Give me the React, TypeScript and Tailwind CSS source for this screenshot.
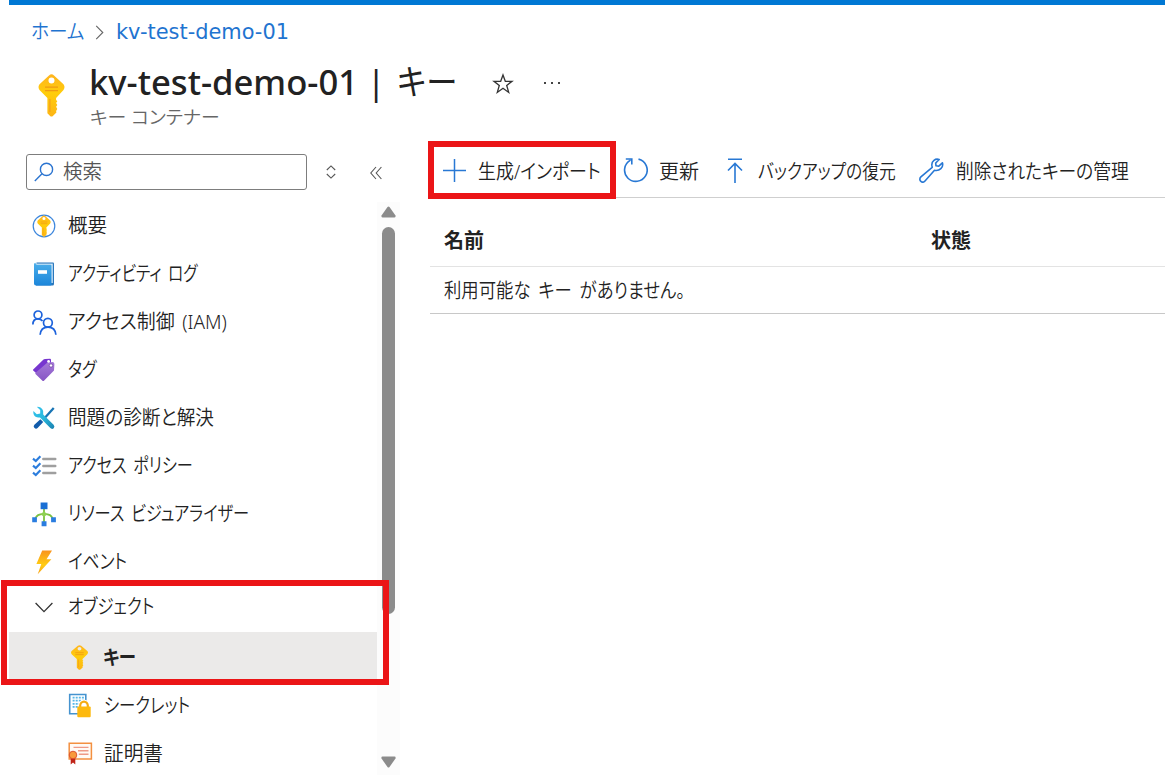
import React, { useLayoutEffect, useRef, useState } from 'react';

interface FitProps {
  width: number;
  className?: string;
  children: string;
}

// Condenses a label horizontally so that it takes exactly `width` pixels
const Fit: React.FC<FitProps> = ({ width, className = '', children }) => {
  const ref = useRef<HTMLSpanElement>(null);
  const [scale, setScale] = useState(1);

  useLayoutEffect(() => {
    if (ref.current) {
      setScale(width / ref.current.offsetWidth);
    }
  }, [width, children]);

  return (
    <span className={`block shrink-0 whitespace-nowrap ${className}`} style={{ width }}>
      <span ref={ref} className="inline-block origin-left" style={{ transform: `scaleX(${scale})` }}>
        {children}
      </span>
    </span>
  );
};

const KeyShape = ({ id }: { id: string }) => (
  <>
    <defs>
      <linearGradient id={id} x1="0" y1="0" x2="0" y2="1">
        <stop offset="0" stopColor="#ffb41f" />
        <stop offset="0.45" stopColor="#ffcd0a" />
        <stop offset="1" stopColor="#fdb515" />
      </linearGradient>
    </defs>
    <path
      fill={`url(#${id})`}
      fillRule="evenodd"
      d="M10.5 1.4Q13 -.8 15.5 1.4L25 10.2Q27 13 25 16L17.6 24V26L18.8 27.2L17.6 29L18.8 31L17.6 32.8L18.8 35L17.6 37L17.9 38.5L14.4 42Q13 43 11.6 42L8.9 39.2V24L1 16Q-1 13 1 10.2ZM13 3.4A3 3 0 1 0 13 9.4A3 3 0 1 0 13 3.4Z"
    />
    <path d="M6.5 13.2H19.5M6.5 16.6H19.5" stroke="#f09a12" strokeWidth="1.3" />
    <path d="M11.4 25V38" stroke="#f3a01a" strokeWidth="1.2" />
  </>
);

const OverviewIcon = () => (
  <svg width="24" height="24" viewBox="0 0 24 24">
    <circle cx="12" cy="12" r="10.8" fill="#fff" stroke="#3c86dc" strokeWidth="1.2" />
    <g transform="translate(5.2 1.4) scale(.52 .5)">
      <KeyShape id="key-overview" />
    </g>
  </svg>
);

const LogIcon = () => (
  <svg width="24" height="24" viewBox="0 0 24 24">
    <defs>
      <linearGradient id="book" x1="0" y1="0" x2="0" y2="1">
        <stop offset="0" stopColor="#4aaeea" />
        <stop offset="1" stopColor="#1c86da" />
      </linearGradient>
    </defs>
    <path d="M4.5 .5H21Q22 .5 22 1.5V22Q22 23.5 20.5 23.5H4Z" fill="#2a78bd" />
    <path d="M4 1.6H20.8V21H4Z" fill="#d3e8f7" />
    <path d="M2 2.6Q2 1 3.5 .8Q3.5 2.8 5 2.8H18.5Q19.5 2.8 19.5 4V22.4Q19.5 23.5 18.4 23.5H4Q2 23.5 2 21.5Z" fill="url(#book)" />
    <path d="M6 8.2H15V11.8H6Z" fill="#fff" />
  </svg>
);

const AccessIcon = () => (
  <svg width="25" height="25" viewBox="0 0 25 25" fill="none" stroke="#1d63dc" strokeWidth="1.7">
    <circle cx="6" cy="4.9" r="3.9" />
    <path d="M.9 14.5C.9 10.8 3 8.9 6 8.9C7.9 8.9 9.4 9.7 10.5 11" />
    <circle cx="15.9" cy="12.7" r="4.4" />
    <path d="M8.1 24.8C8.5 20 11.5 17.1 16 17.1C20.5 17.1 23.5 20 23.9 24.8" />
  </svg>
);

const TagIcon = () => (
  <svg width="24" height="24" viewBox="0 0 24 24">
    <defs>
      <linearGradient id="tag" x1="0" y1="0" x2="0" y2="1">
        <stop offset="0" stopColor="#a67ad8" />
        <stop offset="1" stopColor="#8655c4" />
      </linearGradient>
    </defs>
    <path d="M11.5 1.5Q12 1 13 1L18 .8Q19 .8 19 2V9L8.5 19L1.2 12.6Q.6 12 1.2 11.4Z" fill="#7736cf" />
    <path d="M15.2 4.8L20.4 4Q22.4 4 22.4 6L22 12.6L12.2 22.6Q11.2 23.6 10.2 22.6L3.5 16Q3 15.4 3.6 14.8Z" fill="url(#tag)" />
    <circle cx="16.6" cy="3.4" r="1.4" fill="#fff" />
    <circle cx="19" cy="7.5" r="1.7" fill="#fff" stroke="#65369c" strokeWidth=".7" />
  </svg>
);

const DiagnoseIcon = () => (
  <svg width="24" height="24" viewBox="0 0 24 24">
    <defs>
      <linearGradient id="wrench" x1="0" y1="0" x2="1" y2="1">
        <stop offset="0" stopColor="#35c3ee" />
        <stop offset=".5" stopColor="#28b8dc" />
        <stop offset="1" stopColor="#1b7faf" />
      </linearGradient>
    </defs>
    <path d="M20.9 1.2L22.6 2.8L12.6 13.8L10.9 12.2Z" fill="#1874b4" />
    <path d="M8.4 13.2L11.2 16L5.6 22Q4 23.4 2.3 21.8Q.9 20.2 2.4 18.8Z" fill="#125cab" />
    <path d="M5 .9L8.2 4V7.4L4.8 8.2L1.4 5Q.8 8.8 3.6 10.8Q5.5 12 8 11.4L18.3 22.1Q20 23.6 21.7 22.2Q23.2 20.4 21.6 18.8L11.2 8.4Q12 5.2 10.2 3Q8.2.6 5 .9Z" fill="url(#wrench)" />
  </svg>
);

const PolicyIcon = () => (
  <svg width="25" height="22" viewBox="0 0 25 22" fill="none">
    <g stroke="#2c7ddd" strokeWidth="2.1">
      <path d="M1 3.6L3.8 6L8.4 1.2" />
      <path d="M1 10.6L3.8 13L8.4 8.2" />
      <path d="M1 17.6L3.8 20L8.4 15.2" />
    </g>
    <path d="M11.3 4H23.3M11.3 11H23.3M11.3 18H23.3" stroke="#9f9f9f" strokeWidth="2.4" strokeLinecap="round" />
  </svg>
);

const VisualizerIcon = () => (
  <svg width="24" height="25" viewBox="0 0 24 25">
    <path d="M12 7V20M2.8 18C4 12.8 7.2 12.2 12 11.8C16.8 12.2 20 12.8 21.2 18" fill="none" stroke="#7cc142" strokeWidth="1.8" />
    <path d="M12 9L15 12.2L12 15.2L9 12.2Z" fill="#8fd052" />
    <path d="M8.6 .5H15.5V7.2H8.6Z" fill="#1a6fd4" />
    <path d="M.2 15.3H4.9V20.3H.2ZM9.6 19.3H14.5V24.3H9.6ZM19.1 15.3H23.9V20.3H19.1Z" fill="#2a7de0" />
  </svg>
);

const EventIcon = () => (
  <svg width="24" height="25" viewBox="0 0 24 25">
    <defs>
      <linearGradient id="bolt" x1="0" y1="0" x2="0" y2="1">
        <stop offset="0" stopColor="#f9931d" />
        <stop offset=".6" stopColor="#ffcd12" />
        <stop offset="1" stopColor="#f9a11f" />
      </linearGradient>
    </defs>
    <path d="M10.2 .6H20L14.5 9.2H19.4L5.7 24.3L9.3 14H4.4Z" fill="url(#bolt)" />
  </svg>
);

const SecretIcon = () => (
  <svg width="24" height="25" viewBox="0 0 24 25">
    <path d="M1.7 1.5H17.8V20.7H1.7Z" fill="#fff" stroke="#4593cf" strokeWidth="1.6" />
    <path d="M4.6 4.6H16M4.6 7.7H16M4.6 10.8H16M4.6 13.9H12" stroke="#57b7e8" strokeWidth="1.8" strokeDasharray="2 1.1" />
    <path d="M10.6 15V11.6A5.4 4.8 0 0 1 21.4 11.6V15Z" fill="#fff" />
    <path d="M12.2 15V12.6A3.8 4 0 0 1 19.8 12.6V15" fill="none" stroke="#f5ab12" strokeWidth="2.2" />
    <rect x="9.3" y="13.6" width="13.4" height="10.6" rx="1" fill="#fdb90e" />
  </svg>
);

const CertificateIcon = () => (
  <svg width="25" height="23" viewBox="0 0 25 23">
    <path d="M1.2 1.3H23.4V17H1.2Z" fill="#fffaf5" stroke="#f39040" strokeWidth="1.5" />
    <path d="M5.5 5.4H20.5M10 8.8H20.5M10.8 12.2H20.5" stroke="#ee9a86" strokeWidth="1.4" />
    <path d="M2.7 14H7.3V22.6L5 20.4L2.7 22.6Z" fill="#c02418" />
    <circle cx="5" cy="13" r="3.8" fill="#f89a3c" stroke="#d9492a" strokeWidth=".9" />
  </svg>
);

const menuItems = [
  { label: '概要', width: 39, icon: <OverviewIcon /> },
  { label: 'アクティビティ ログ', width: 130, icon: <LogIcon /> },
  { label: 'アクセス制御 (IAM)', width: 159, icon: <AccessIcon /> },
  { label: 'タグ', width: 29, icon: <TagIcon /> },
  { label: '問題の診断と解決', width: 146, icon: <DiagnoseIcon /> },
  { label: 'アクセス ポリシー', width: 125, icon: <PolicyIcon /> },
  { label: 'リソース ビジュアライザー', width: 181, icon: <VisualizerIcon /> },
  { label: 'イベント', width: 59, icon: <EventIcon /> },
];

const Header = () => (
  <header className="h-[141px] shrink-0 pl-[9px]">
    <div className="h-[5px] bg-[#0078d4]" />
    <nav className="flex h-[52px] items-center pl-[22px] pt-px text-[#1f74d0]">
      <Fit width={53}>ホーム</Fit>
      <svg className="ml-[11px] mr-[12px] mt-[2px]" width="9" height="15" viewBox="0 0 9 16" fill="none" stroke="#666" strokeWidth="1.2">
        <path d="M1 1L8 8L1 15" />
      </svg>
      <Fit width={173} className="mt-px font-['DejaVu_Sans',sans-serif] text-[22px] font-normal">kv-test-demo-01</Fit>
    </nav>
    <div className="-mt-px flex pl-[29px]">
      <svg className="mt-[18px]" width="27" height="43" viewBox="0 0 26 43">
        <KeyShape id="key-title" />
      </svg>
      <div className="ml-[24px] pt-px">
        <div className="flex h-[50px] items-center">
          <h1 className="flex items-center text-[35px] leading-[50px] text-[#222]">
            <Fit width={269} className="font-['Noto_Sans',sans-serif] font-[550]">kv-test-demo-01</Fit>
            <Fit width={16} className="ml-[10px] font-['Noto_Sans',sans-serif] font-medium">|</Fit>
            <Fit width={60} className="ml-[13px] font-normal">キー</Fit>
          </h1>
          <svg className="ml-[35px] mt-1" width="22" height="22" viewBox="0 0 22 22" fill="none" stroke="#333" strokeWidth="1.3">
            <path d="M11 2L13.3 8.3H20L14.7 12.4L16.7 19.4L11 15.2L5.3 19.4L7.3 12.4L2 8.3H8.7Z" />
          </svg>
          <svg className="ml-[29px] mt-[2px]" width="18" height="4" viewBox="0 0 18 4" fill="#444">
            <path d="M1 1H3V3H1ZM8 1H10V3H8ZM15 1H17V3H15Z" />
          </svg>
        </div>
        <Fit width={130} className="ml-px text-[18px] leading-[20px] text-[#666]">キー コンテナー</Fit>
      </div>
    </div>
  </header>
);

const Sidebar = () => (
  <aside className="flex w-[400px] shrink-0 flex-col">
    <div className="flex h-[61px] shrink-0 items-center pl-[26px]">
      <div className="flex h-[36px] w-[281px] items-center rounded-[3px] border border-[#7d7d7d] pl-[7px] text-[#555]">
        <svg width="20" height="20" viewBox="0 0 20 20" fill="none" stroke="#2b74d0" strokeWidth="1.4">
          <circle cx="12.5" cy="7.4" r="6.1" />
          <path d="M8 11.8L.8 19" />
        </svg>
        <Fit width={39} className="ml-[9px]">検索</Fit>
      </div>
      <svg className="ml-[19px]" width="10" height="14" viewBox="0 0 10 14" fill="none" stroke="#555" strokeWidth="1.1">
        <path d="M.8 5L5 .9L9.2 5M.8 9L5 13.1L9.2 9" />
      </svg>
      <svg className="ml-[34px] mt-[2px]" width="12" height="14" viewBox="0 0 12 14" fill="none" stroke="#555" strokeWidth="1.1">
        <path d="M6 1L.8 7L6 13M11.4 1L6.2 7L11.4 13" />
      </svg>
    </div>
    <div className="flex min-h-0 flex-1">
      <ul className="w-[377px] shrink-0">
        {menuItems.map((item) => (
          <li key={item.label} className="flex h-[48px] items-center pl-[32px]">
            <span className="flex w-[36px] shrink-0">{item.icon}</span>
            <Fit width={item.width} className="[word-spacing:3px]">{item.label}</Fit>
          </li>
        ))}
        <li className="flex h-[46px] items-center pb-[4px] pl-[35px]">
          <svg className="mr-[15px]" width="18" height="11" viewBox="0 0 18 11" fill="none" stroke="#333" strokeWidth="1.3">
            <path d="M.6 1L9 9.6L17.4 1" />
          </svg>
          <Fit width={86}>オブジェクト</Fit>
        </li>
        <li className="ml-[9px] flex h-[48px] items-center bg-[#ebeae9] pl-[62px] pt-[3px]">
          <svg width="17" height="25" viewBox="0 0 26 43" preserveAspectRatio="none">
            <KeyShape id="key-menu" />
          </svg>
          <Fit width={33} className="ml-[15px] font-bold">キー</Fit>
        </li>
        <li className="flex h-[48px] items-center pl-[68px] pt-[3px]">
          <span className="flex w-[36px] shrink-0"><SecretIcon /></span>
          <Fit width={86}>シークレット</Fit>
        </li>
        <li className="flex h-[48px] items-center pl-[68px] pt-[3px]">
          <span className="flex w-[36px] shrink-0"><CertificateIcon /></span>
          <Fit width={59}>証明書</Fit>
        </li>
      </ul>
      <div className="flex w-[23px] flex-col items-center bg-[#fcfcfc] pt-[4px]">
        <svg width="15" height="12" viewBox="0 0 15 12" fill="#8b8b8b">
          <path d="M6.5 1Q7.5 0 8.5 1L14.5 9.5Q15 11.5 13.5 11.5H1.5Q0 11.5.5 9.5Z" />
        </svg>
        <div className="mt-[9px] h-[387px] w-[13px] rounded-full bg-[#8b8b8b]" />
        <svg className="mt-[142px]" width="15" height="12" viewBox="0 0 15 12" fill="#8b8b8b">
          <path d="M6.5 11Q7.5 12 8.5 11L14.5 2.5Q15 .5 13.5 .5H1.5Q0 .5.5 2.5Z" />
        </svg>
      </div>
    </div>
  </aside>
);

const Toolbar = () => (
  <div className="flex h-[57px] items-center border-b border-[#cfcfcf] pl-[13px] pt-[3px]">
    <svg width="23" height="23" viewBox="0 0 23 23" stroke="#2878d4" strokeWidth="1.5">
      <path d="M11.5 0V23M0 11.5H23" />
    </svg>
    <Fit width={123} className="ml-[12px] mt-[2px]">生成/インポート</Fit>
    <svg className="ml-[22px] -mt-px" width="25" height="26" viewBox="0 0 25 26" fill="none" stroke="#2878d4" strokeWidth="1.6">
      <path d="M15.5 2.1A11.3 11.3 0 1 1 7.6 3.1M2.8 2H8.8V7.6" />
    </svg>
    <Fit width={40} className="ml-[11px] mt-[2px]">更新</Fit>
    <svg className="ml-[28px] -mt-px" width="16" height="25" viewBox="0 0 16 25" fill="none" stroke="#2878d4" strokeWidth="1.6">
      <path d="M1 1.2H15M8 5V25M1 12.5L8 5.5L15 12.5" />
    </svg>
    <Fit width={138} className="ml-[15px] mt-[2px]">バックアップの復元</Fit>
    <svg className="ml-[23px] -mt-px" width="25" height="25" viewBox="0 0 25 25" fill="none" stroke="#2878d4" strokeWidth="1.6" strokeLinejoin="round">
      <path d="M20.2 1.5C16.4 .2 12.4 3 12.9 7.4L13.2 9.4L1.9 18.9C.3 20.5.7 22.5 1.9 23.4C3.2 24.5 4.8 24.3 6 23L15.5 12.3C20.5 13.4 24.8 9.4 23.4 4.8L19.8 8.2L17 7.8L16.7 5Z" />
    </svg>
    <Fit width={173} className="ml-[12px] mt-[2px]">削除されたキーの管理</Fit>
  </div>
);

const KeyTable = () => (
  <div>
    <div className="flex h-[69px] items-center border-b border-[#e3e3e3] pl-[14px] pt-[17px] font-bold">
      <Fit width={40} className="mr-[447px]">名前</Fit>
      <Fit width={40}>状態</Fit>
    </div>
    <div className="flex h-[47px] items-center border-b border-[#c8c8c8] pl-[14px] pt-[2px]">
      <Fit width={241} className="[word-spacing:4px]">利用可能な キー がありません。</Fit>
    </div>
  </div>
);

const App: React.FC = () => {
  return (
    <div className="relative flex h-[775px] w-[1165px] flex-col overflow-hidden bg-white font-['Noto_Sans','Noto_Sans_CJK_JP',sans-serif] text-[20px] font-[350] leading-[28px] text-[#222] [font-feature-settings:'palt']">
      <Header />
      <div className="flex min-h-0 flex-1">
        <Sidebar />
        <main className="ml-[30px] min-w-0 flex-1">
          <Toolbar />
          <KeyTable />
        </main>
      </div>

      {/* highlight frames */}
      <div className="absolute left-[428px] top-[141px] h-[58px] w-[188px] border-[6px] border-[#eb1517]" />
      <div className="absolute left-[1px] top-[580px] h-[105px] w-[388px] border-[6px] border-[#eb1517]" />
    </div>
  );
};

export default App;
